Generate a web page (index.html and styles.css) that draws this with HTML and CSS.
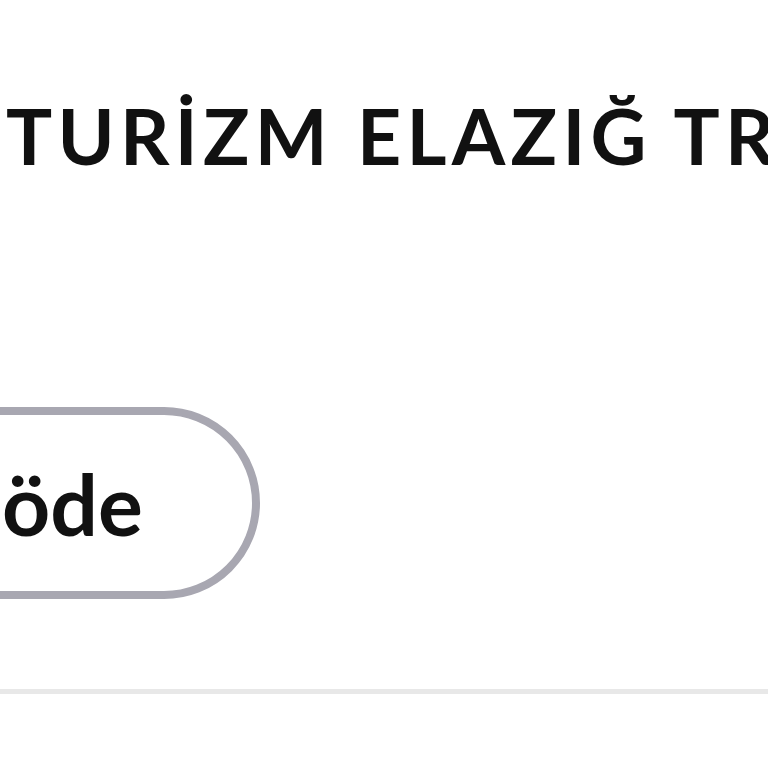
FILE: index.html
```html
<!DOCTYPE html>
<html lang="tr">
<head>
    <meta charset="UTF-8">
    <meta name="viewport" content="width=device-width, initial-scale=1.0">
    <title>Ödeme</title>
    <link rel="stylesheet" href="styles.css">
</head>
<body>
    <div id="page">
        <h1 class="company">TURİZM ELAZIĞ TRANSFER</h1>
        <div class="actions">
            <button class="pay-button">öde</button>
        </div>
        <div class="divider"></div>
    </div>
</body>
</html>
```

FILE: styles.css
```css
body {
    margin: 0;
    background-color: #ffffff;
    font-family: Lato, "Noto Sans", sans-serif;
    color: #111111;
    overflow: hidden;
}

#page {
    width: 768px;
    height: 768px;
    overflow: hidden;
}

.company {
    margin: 0;
    padding: 90px 0 0 6px;
    font-size: 77px;
    font-weight: 700;
    letter-spacing: 5.3px;
    line-height: 90px;
    white-space: nowrap;
}

.actions {
    margin-top: 227px;
    display: flex;
}

.pay-button {
    margin-left: -126px;
    height: 192px;
    padding: 0 109px 0 120px;
    border: 8px solid #a8a7b1;
    border-radius: 96px;
    background-color: #ffffff;
    font-family: Lato, "Noto Sans", sans-serif;
    font-size: 84px;
    font-weight: 700;
    color: #111111;
    cursor: pointer;
}

.divider {
    margin-top: 90px;
    height: 5px;
    background-color: #e8e8e8;
}
```
